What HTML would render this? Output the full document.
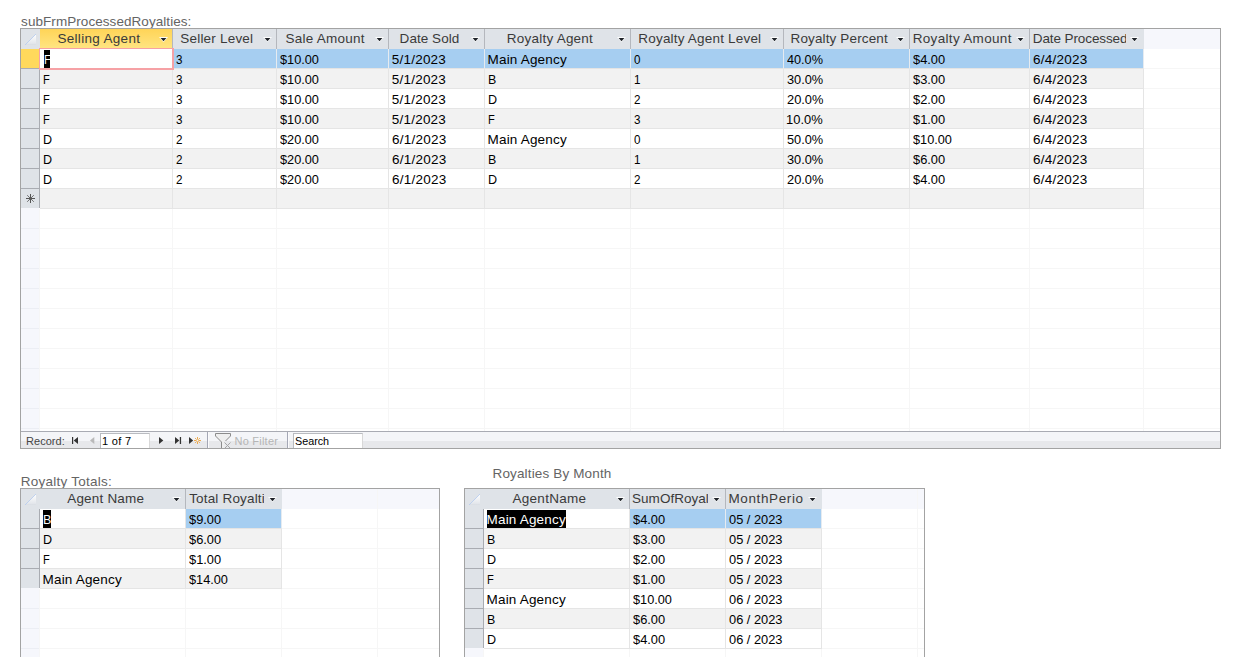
<!DOCTYPE html>
<html lang="en"><head><meta charset="utf-8"><title>Royalties</title>
<style>
*{box-sizing:border-box}
html,body{margin:0;padding:0}
body{width:1247px;height:657px;overflow:hidden;background:#fff;position:relative;
 font-family:"Liberation Sans",sans-serif;font-size:13.5px;color:#000}
.lbl{position:absolute;white-space:pre;line-height:19px;color:#646464;height:19px;margin:0;font-weight:400;font-size:13.5px}
.grid{position:absolute;border:1px solid #a3a3a3;background:#fff;overflow:hidden;box-sizing:content-box}
.grid div,.grid span,.grid svg{position:absolute}
.hbg{background:#f6f7fc}
.selbg{background:#f6f7fc}
.fh{height:1px;background:#f6f6f6}
.fv{width:1px;background:#f6f6f6}
.fh.s{background:#eceef4}
.hrow{left:0;top:0;height:20px;width:100%}
.hc{top:0;height:20px;background:#dfe3e8;color:#3a3a3a}
.hc.hsel{background:linear-gradient(#ffd457,#ffe583)}
.hc .clip{left:0;top:0;height:20px;overflow:hidden}
.ht{white-space:pre;line-height:19px}
.hline{top:0;width:1px;height:20px;background:#b4b7bd}
.row{left:0;height:20px}
.rs{left:0;top:0;width:19px;height:20px;background:#dfe3e8;border-right:1px solid #a9acb2;border-bottom:1px solid #a9acb2}
.rs.rsel{background:#ffd95c}
.rs.last{height:19px;border-bottom:0}
.c{top:0;height:20px;background:#fff;border-right:1px solid #e5e5e5;border-bottom:1px solid #e5e5e5;overflow:hidden}
.row.alt .c{background:#f2f2f2}
.row.cur .c{background:#a6cef1;border-right-color:#e6ebf0;border-bottom-color:#e4e4e4}
.row.cur .c.act{background:#fff;border-right-color:#e5e5e5}
.ct{white-space:pre;line-height:19px;height:19px}
.selbox{background:#000;top:1px;height:18px}
.ct.sel{color:#fff}
.row.cur .c.act.foc{border-right-color:#f6a1a5;border-bottom-color:#f6a1a5;box-shadow:-1px -1px 0 0 #f6a1a5,1px 1px 0 0 #f6a1a5,1px -1px 0 0 #f6a1a5,-1px 1px 0 0 #f6a1a5;overflow:visible;z-index:2}
.nav{left:0;height:17px;border-top:1px solid #a9abb3;background:linear-gradient(#f4f5f8 0,#f4f5f8 9px,#e7e8eb 9px,#e7e8eb 100%)}
.nt{font-size:11px;line-height:18px;color:#444;white-space:pre}
.nt.dis{color:#b5b5b5}
.nav .ni{top:5px}
.nbox{top:1px;height:15px;background:#fff;border:1px solid #b9bbc0;border-bottom:0;border-right-color:#d8d8d8}
.bt{font-size:11px;line-height:14px;white-space:pre}
.nsep{top:0;width:2px;height:16px;background:linear-gradient(90deg,#a4a7b5 0,#a4a7b5 1px,#fbfbfc 1px,#fbfbfc 2px)}
</style></head><body>
<h2 class="lbl" style="left:21.10px;top:12px;letter-spacing:0.06px;">subFrmProcessedRoyalties:</h2>
<h2 class="lbl" style="left:20.80px;top:472px;letter-spacing:0.239px;">Royalty Totals:</h2>
<h2 class="lbl" style="left:492.50px;top:464px;letter-spacing:0.147px;">Royalties By Month</h2>
<section class="grid" id="g1" style="left:20px;top:28px;width:1199px;height:419px">
<div class="hbg" style="left:0;top:0;width:1199px;height:20px"></div>
<div class="selbg" style="left:0;top:20px;width:18px;height:382px"></div>
<div class="fh" style="left:1123px;top:39px;width:76px"></div>
<div class="fh" style="left:1123px;top:59px;width:76px"></div>
<div class="fh" style="left:1123px;top:79px;width:76px"></div>
<div class="fh" style="left:1123px;top:99px;width:76px"></div>
<div class="fh" style="left:1123px;top:119px;width:76px"></div>
<div class="fh" style="left:1123px;top:139px;width:76px"></div>
<div class="fh" style="left:1123px;top:159px;width:76px"></div>
<div class="fh" style="left:1123px;top:179px;width:76px"></div>
<div class="fh" style="left:0;top:199px;width:1199px"></div>
<div class="fh s" style="left:0;top:199px;width:18px"></div>
<div class="fh" style="left:0;top:219px;width:1199px"></div>
<div class="fh s" style="left:0;top:219px;width:18px"></div>
<div class="fh" style="left:0;top:239px;width:1199px"></div>
<div class="fh s" style="left:0;top:239px;width:18px"></div>
<div class="fh" style="left:0;top:259px;width:1199px"></div>
<div class="fh s" style="left:0;top:259px;width:18px"></div>
<div class="fh" style="left:0;top:279px;width:1199px"></div>
<div class="fh s" style="left:0;top:279px;width:18px"></div>
<div class="fh" style="left:0;top:299px;width:1199px"></div>
<div class="fh s" style="left:0;top:299px;width:18px"></div>
<div class="fh" style="left:0;top:319px;width:1199px"></div>
<div class="fh s" style="left:0;top:319px;width:18px"></div>
<div class="fh" style="left:0;top:339px;width:1199px"></div>
<div class="fh s" style="left:0;top:339px;width:18px"></div>
<div class="fh" style="left:0;top:359px;width:1199px"></div>
<div class="fh s" style="left:0;top:359px;width:18px"></div>
<div class="fh" style="left:0;top:379px;width:1199px"></div>
<div class="fh s" style="left:0;top:379px;width:18px"></div>
<div class="fh" style="left:0;top:399px;width:1199px"></div>
<div class="fh s" style="left:0;top:399px;width:18px"></div>
<div class="fv" style="left:18px;top:180px;height:222px"></div>
<div class="fv" style="left:151px;top:180px;height:222px"></div>
<div class="fv" style="left:255px;top:180px;height:222px"></div>
<div class="fv" style="left:367px;top:180px;height:222px"></div>
<div class="fv" style="left:463px;top:180px;height:222px"></div>
<div class="fv" style="left:609px;top:180px;height:222px"></div>
<div class="fv" style="left:762px;top:180px;height:222px"></div>
<div class="fv" style="left:888px;top:180px;height:222px"></div>
<div class="fv" style="left:1008px;top:180px;height:222px"></div>
<div class="fv" style="left:1122px;top:180px;height:222px"></div>
<div class="hrow" role="row">
<div class="hc corner" style="left:0;width:19px"><svg width="18" height="20" viewBox="0 0 18 20"><defs><linearGradient id="g1cg" x1="0" y1="0" x2="0" y2="1"><stop offset="0" stop-color="#ffffff"/><stop offset=".85" stop-color="#e4e7ec"/><stop offset="1" stop-color="#d8dce2"/></linearGradient></defs><path d="M15 5V16H4Z" fill="url(#g1cg)"/><path d="M4 16L15 5" stroke="#b9cdee" stroke-width=".9" fill="none"/></svg></div>
<div class="hc hsel" role="columnheader" style="left:19px;width:132px"><div class="clip" style="width:115px">
<span class="ht" style="left:17.45px;top:0px;letter-spacing:0.308px;">Selling Agent</span>
</div></div>
<svg class="dd" style="left:138px;top:8px" width="10" height="6" viewBox="0 0 10 6"><path d="M0 0H9L4.5 5.2Z" fill="#fff" opacity=".9"/><path d="M1.6 1H7.4L4.5 4.2Z" fill="#20242a"/></svg>
<div class="hline" style="left:151px"></div>
<div class="hc" role="columnheader" style="left:152px;width:103px"><div class="clip" style="width:86px">
<span class="ht" style="left:7.25px;top:0px;letter-spacing:0.209px;">Seller Level</span>
</div></div>
<svg class="dd" style="left:242px;top:8px" width="10" height="6" viewBox="0 0 10 6"><path d="M0 0H9L4.5 5.2Z" fill="#fff" opacity=".9"/><path d="M1.6 1H7.4L4.5 4.2Z" fill="#20242a"/></svg>
<div class="hline" style="left:255px"></div>
<div class="hc" role="columnheader" style="left:256px;width:111px"><div class="clip" style="width:94px">
<span class="ht" style="left:8.55px;top:0px;letter-spacing:0.245px;">Sale Amount</span>
</div></div>
<svg class="dd" style="left:354px;top:8px" width="10" height="6" viewBox="0 0 10 6"><path d="M0 0H9L4.5 5.2Z" fill="#fff" opacity=".9"/><path d="M1.6 1H7.4L4.5 4.2Z" fill="#20242a"/></svg>
<div class="hline" style="left:367px"></div>
<div class="hc" role="columnheader" style="left:368px;width:95px"><div class="clip" style="width:78px">
<span class="ht" style="left:10.60px;top:0px;letter-spacing:0.044px;">Date Sold</span>
</div></div>
<svg class="dd" style="left:450px;top:8px" width="10" height="6" viewBox="0 0 10 6"><path d="M0 0H9L4.5 5.2Z" fill="#fff" opacity=".9"/><path d="M1.6 1H7.4L4.5 4.2Z" fill="#20242a"/></svg>
<div class="hline" style="left:463px"></div>
<div class="hc" role="columnheader" style="left:464px;width:145px"><div class="clip" style="width:128px">
<span class="ht" style="left:21.80px;top:0px;letter-spacing:0.229px;">Royalty Agent</span>
</div></div>
<svg class="dd" style="left:596px;top:8px" width="10" height="6" viewBox="0 0 10 6"><path d="M0 0H9L4.5 5.2Z" fill="#fff" opacity=".9"/><path d="M1.6 1H7.4L4.5 4.2Z" fill="#20242a"/></svg>
<div class="hline" style="left:609px"></div>
<div class="hc" role="columnheader" style="left:610px;width:152px"><div class="clip" style="width:135px">
<span class="ht" style="left:7.30px;top:0px;letter-spacing:0.194px;">Royalty Agent Level</span>
</div></div>
<svg class="dd" style="left:749px;top:8px" width="10" height="6" viewBox="0 0 10 6"><path d="M0 0H9L4.5 5.2Z" fill="#fff" opacity=".9"/><path d="M1.6 1H7.4L4.5 4.2Z" fill="#20242a"/></svg>
<div class="hline" style="left:762px"></div>
<div class="hc" role="columnheader" style="left:763px;width:125px"><div class="clip" style="width:108px">
<span class="ht" style="left:6.50px;top:0px;letter-spacing:0.136px;">Royalty Percent</span>
</div></div>
<svg class="dd" style="left:875px;top:8px" width="10" height="6" viewBox="0 0 10 6"><path d="M0 0H9L4.5 5.2Z" fill="#fff" opacity=".9"/><path d="M1.6 1H7.4L4.5 4.2Z" fill="#20242a"/></svg>
<div class="hline" style="left:888px"></div>
<div class="hc" role="columnheader" style="left:889px;width:119px"><div class="clip" style="width:102px">
<span class="ht" style="left:2.70px;top:0px;letter-spacing:0.323px;">Royalty Amount</span>
</div></div>
<svg class="dd" style="left:995px;top:8px" width="10" height="6" viewBox="0 0 10 6"><path d="M0 0H9L4.5 5.2Z" fill="#fff" opacity=".9"/><path d="M1.6 1H7.4L4.5 4.2Z" fill="#20242a"/></svg>
<div class="hline" style="left:1008px"></div>
<div class="hc" role="columnheader" style="left:1009px;width:114px"><div class="clip" style="width:96px">
<span class="ht" style="left:2.80px;top:0px;letter-spacing:-0.104px;">Date Processed</span>
</div></div>
<svg class="dd" style="left:1109px;top:8px" width="10" height="6" viewBox="0 0 10 6"><path d="M0 0H9L4.5 5.2Z" fill="#fff" opacity=".9"/><path d="M1.6 1H7.4L4.5 4.2Z" fill="#20242a"/></svg>
</div>
<div class="row cur" role="row" style="top:20px;width:1123px">
<div class="rs rsel"></div>
<div class="c act foc" role="gridcell" style="left:19px;width:133px">
<div class="selbox" style="left:4px;width:6px"></div>
<span class="ct sel" style="left:3.98px;top:1px;transform:scaleX(0.82);transform-origin:0 0;">F</span>
</div>
<div class="c" role="gridcell" style="left:152px;width:104px">
<span class="ct" style="left:3.17px;top:1px;transform:scaleX(0.86);transform-origin:0 0;">3</span>
</div>
<div class="c" role="gridcell" style="left:256px;width:112px">
<span class="ct" style="left:3.06px;top:1px;transform:scaleX(0.943);transform-origin:0 0;">$10.00</span>
</div>
<div class="c" role="gridcell" style="left:368px;width:96px">
<span class="ct" style="left:2.80px;top:1px;letter-spacing:0.214px;">5/1/2023</span>
</div>
<div class="c" role="gridcell" style="left:464px;width:146px">
<span class="ct" style="left:2.60px;top:1px;letter-spacing:0.175px;">Main Agency</span>
</div>
<div class="c" role="gridcell" style="left:610px;width:153px">
<span class="ct" style="left:3.17px;top:1px;transform:scaleX(0.86);transform-origin:0 0;">0</span>
</div>
<div class="c" role="gridcell" style="left:763px;width:126px">
<span class="ct" style="left:3.07px;top:1px;transform:scaleX(0.939);transform-origin:0 0;">40.0%</span>
</div>
<div class="c" role="gridcell" style="left:889px;width:120px">
<span class="ct" style="left:3.06px;top:1px;transform:scaleX(0.952);transform-origin:0 0;">$4.00</span>
</div>
<div class="c" role="gridcell" style="left:1009px;width:114px">
<span class="ct" style="left:3.05px;top:1px;letter-spacing:0.25px;">6/4/2023</span>
</div>
</div>
<div class="row alt" role="row" style="top:40px;width:1123px">
<div class="rs"></div>
<div class="c" role="gridcell" style="left:19px;width:133px">
<span class="ct" style="left:3.48px;top:1px;transform:scaleX(0.82);transform-origin:0 0;">F</span>
</div>
<div class="c" role="gridcell" style="left:152px;width:104px">
<span class="ct" style="left:3.17px;top:1px;transform:scaleX(0.86);transform-origin:0 0;">3</span>
</div>
<div class="c" role="gridcell" style="left:256px;width:112px">
<span class="ct" style="left:3.06px;top:1px;transform:scaleX(0.943);transform-origin:0 0;">$10.00</span>
</div>
<div class="c" role="gridcell" style="left:368px;width:96px">
<span class="ct" style="left:2.80px;top:1px;letter-spacing:0.214px;">5/1/2023</span>
</div>
<div class="c" role="gridcell" style="left:464px;width:146px">
<span class="ct" style="left:3.38px;top:1px;transform:scaleX(0.92);transform-origin:0 0;">B</span>
</div>
<div class="c" role="gridcell" style="left:610px;width:153px">
<span class="ct" style="left:2.74px;top:1px;transform:scaleX(0.86);transform-origin:0 0;">1</span>
</div>
<div class="c" role="gridcell" style="left:763px;width:126px">
<span class="ct" style="left:2.83px;top:1px;transform:scaleX(0.945);transform-origin:0 0;">30.0%</span>
</div>
<div class="c" role="gridcell" style="left:889px;width:120px">
<span class="ct" style="left:3.06px;top:1px;transform:scaleX(0.952);transform-origin:0 0;">$3.00</span>
</div>
<div class="c" role="gridcell" style="left:1009px;width:114px">
<span class="ct" style="left:3.05px;top:1px;letter-spacing:0.25px;">6/4/2023</span>
</div>
</div>
<div class="row" role="row" style="top:60px;width:1123px">
<div class="rs"></div>
<div class="c" role="gridcell" style="left:19px;width:133px">
<span class="ct" style="left:3.48px;top:1px;transform:scaleX(0.82);transform-origin:0 0;">F</span>
</div>
<div class="c" role="gridcell" style="left:152px;width:104px">
<span class="ct" style="left:3.17px;top:1px;transform:scaleX(0.86);transform-origin:0 0;">3</span>
</div>
<div class="c" role="gridcell" style="left:256px;width:112px">
<span class="ct" style="left:3.06px;top:1px;transform:scaleX(0.943);transform-origin:0 0;">$10.00</span>
</div>
<div class="c" role="gridcell" style="left:368px;width:96px">
<span class="ct" style="left:2.80px;top:1px;letter-spacing:0.214px;">5/1/2023</span>
</div>
<div class="c" role="gridcell" style="left:464px;width:146px">
<span class="ct" style="left:3.37px;top:1px;transform:scaleX(0.93);transform-origin:0 0;">D</span>
</div>
<div class="c" role="gridcell" style="left:610px;width:153px">
<span class="ct" style="left:2.96px;top:1px;transform:scaleX(0.86);transform-origin:0 0;">2</span>
</div>
<div class="c" role="gridcell" style="left:763px;width:126px">
<span class="ct" style="left:2.59px;top:1px;transform:scaleX(0.951);transform-origin:0 0;">20.0%</span>
</div>
<div class="c" role="gridcell" style="left:889px;width:120px">
<span class="ct" style="left:3.06px;top:1px;transform:scaleX(0.952);transform-origin:0 0;">$2.00</span>
</div>
<div class="c" role="gridcell" style="left:1009px;width:114px">
<span class="ct" style="left:3.05px;top:1px;letter-spacing:0.25px;">6/4/2023</span>
</div>
</div>
<div class="row alt" role="row" style="top:80px;width:1123px">
<div class="rs"></div>
<div class="c" role="gridcell" style="left:19px;width:133px">
<span class="ct" style="left:3.48px;top:1px;transform:scaleX(0.82);transform-origin:0 0;">F</span>
</div>
<div class="c" role="gridcell" style="left:152px;width:104px">
<span class="ct" style="left:3.17px;top:1px;transform:scaleX(0.86);transform-origin:0 0;">3</span>
</div>
<div class="c" role="gridcell" style="left:256px;width:112px">
<span class="ct" style="left:3.06px;top:1px;transform:scaleX(0.943);transform-origin:0 0;">$10.00</span>
</div>
<div class="c" role="gridcell" style="left:368px;width:96px">
<span class="ct" style="left:2.80px;top:1px;letter-spacing:0.214px;">5/1/2023</span>
</div>
<div class="c" role="gridcell" style="left:464px;width:146px">
<span class="ct" style="left:3.48px;top:1px;transform:scaleX(0.82);transform-origin:0 0;">F</span>
</div>
<div class="c" role="gridcell" style="left:610px;width:153px">
<span class="ct" style="left:3.17px;top:1px;transform:scaleX(0.86);transform-origin:0 0;">3</span>
</div>
<div class="c" role="gridcell" style="left:763px;width:126px">
<span class="ct" style="left:2.34px;top:1px;transform:scaleX(0.958);transform-origin:0 0;">10.0%</span>
</div>
<div class="c" role="gridcell" style="left:889px;width:120px">
<span class="ct" style="left:3.06px;top:1px;transform:scaleX(0.952);transform-origin:0 0;">$1.00</span>
</div>
<div class="c" role="gridcell" style="left:1009px;width:114px">
<span class="ct" style="left:3.05px;top:1px;letter-spacing:0.25px;">6/4/2023</span>
</div>
</div>
<div class="row" role="row" style="top:100px;width:1123px">
<div class="rs"></div>
<div class="c" role="gridcell" style="left:19px;width:133px">
<span class="ct" style="left:3.37px;top:1px;transform:scaleX(0.93);transform-origin:0 0;">D</span>
</div>
<div class="c" role="gridcell" style="left:152px;width:104px">
<span class="ct" style="left:2.96px;top:1px;transform:scaleX(0.86);transform-origin:0 0;">2</span>
</div>
<div class="c" role="gridcell" style="left:256px;width:112px">
<span class="ct" style="left:3.06px;top:1px;transform:scaleX(0.943);transform-origin:0 0;">$20.00</span>
</div>
<div class="c" role="gridcell" style="left:368px;width:96px">
<span class="ct" style="left:3.05px;top:1px;letter-spacing:0.25px;">6/1/2023</span>
</div>
<div class="c" role="gridcell" style="left:464px;width:146px">
<span class="ct" style="left:2.60px;top:1px;letter-spacing:0.175px;">Main Agency</span>
</div>
<div class="c" role="gridcell" style="left:610px;width:153px">
<span class="ct" style="left:3.17px;top:1px;transform:scaleX(0.86);transform-origin:0 0;">0</span>
</div>
<div class="c" role="gridcell" style="left:763px;width:126px">
<span class="ct" style="left:2.83px;top:1px;transform:scaleX(0.945);transform-origin:0 0;">50.0%</span>
</div>
<div class="c" role="gridcell" style="left:889px;width:120px">
<span class="ct" style="left:3.06px;top:1px;transform:scaleX(0.943);transform-origin:0 0;">$10.00</span>
</div>
<div class="c" role="gridcell" style="left:1009px;width:114px">
<span class="ct" style="left:3.05px;top:1px;letter-spacing:0.25px;">6/4/2023</span>
</div>
</div>
<div class="row alt" role="row" style="top:120px;width:1123px">
<div class="rs"></div>
<div class="c" role="gridcell" style="left:19px;width:133px">
<span class="ct" style="left:3.37px;top:1px;transform:scaleX(0.93);transform-origin:0 0;">D</span>
</div>
<div class="c" role="gridcell" style="left:152px;width:104px">
<span class="ct" style="left:2.96px;top:1px;transform:scaleX(0.86);transform-origin:0 0;">2</span>
</div>
<div class="c" role="gridcell" style="left:256px;width:112px">
<span class="ct" style="left:3.06px;top:1px;transform:scaleX(0.943);transform-origin:0 0;">$20.00</span>
</div>
<div class="c" role="gridcell" style="left:368px;width:96px">
<span class="ct" style="left:3.05px;top:1px;letter-spacing:0.25px;">6/1/2023</span>
</div>
<div class="c" role="gridcell" style="left:464px;width:146px">
<span class="ct" style="left:3.38px;top:1px;transform:scaleX(0.92);transform-origin:0 0;">B</span>
</div>
<div class="c" role="gridcell" style="left:610px;width:153px">
<span class="ct" style="left:2.74px;top:1px;transform:scaleX(0.86);transform-origin:0 0;">1</span>
</div>
<div class="c" role="gridcell" style="left:763px;width:126px">
<span class="ct" style="left:2.83px;top:1px;transform:scaleX(0.945);transform-origin:0 0;">30.0%</span>
</div>
<div class="c" role="gridcell" style="left:889px;width:120px">
<span class="ct" style="left:3.06px;top:1px;transform:scaleX(0.952);transform-origin:0 0;">$6.00</span>
</div>
<div class="c" role="gridcell" style="left:1009px;width:114px">
<span class="ct" style="left:3.05px;top:1px;letter-spacing:0.25px;">6/4/2023</span>
</div>
</div>
<div class="row" role="row" style="top:140px;width:1123px">
<div class="rs"></div>
<div class="c" role="gridcell" style="left:19px;width:133px">
<span class="ct" style="left:3.37px;top:1px;transform:scaleX(0.93);transform-origin:0 0;">D</span>
</div>
<div class="c" role="gridcell" style="left:152px;width:104px">
<span class="ct" style="left:2.96px;top:1px;transform:scaleX(0.86);transform-origin:0 0;">2</span>
</div>
<div class="c" role="gridcell" style="left:256px;width:112px">
<span class="ct" style="left:3.06px;top:1px;transform:scaleX(0.943);transform-origin:0 0;">$20.00</span>
</div>
<div class="c" role="gridcell" style="left:368px;width:96px">
<span class="ct" style="left:3.05px;top:1px;letter-spacing:0.25px;">6/1/2023</span>
</div>
<div class="c" role="gridcell" style="left:464px;width:146px">
<span class="ct" style="left:3.37px;top:1px;transform:scaleX(0.93);transform-origin:0 0;">D</span>
</div>
<div class="c" role="gridcell" style="left:610px;width:153px">
<span class="ct" style="left:2.96px;top:1px;transform:scaleX(0.86);transform-origin:0 0;">2</span>
</div>
<div class="c" role="gridcell" style="left:763px;width:126px">
<span class="ct" style="left:2.59px;top:1px;transform:scaleX(0.951);transform-origin:0 0;">20.0%</span>
</div>
<div class="c" role="gridcell" style="left:889px;width:120px">
<span class="ct" style="left:3.06px;top:1px;transform:scaleX(0.952);transform-origin:0 0;">$4.00</span>
</div>
<div class="c" role="gridcell" style="left:1009px;width:114px">
<span class="ct" style="left:3.05px;top:1px;letter-spacing:0.25px;">6/4/2023</span>
</div>
</div>
<div class="row alt" role="row" style="top:160px;width:1123px">
<div class="rs last"><svg width="18" height="19" viewBox="0 0 18 19"><path d="M9.5 5V14M5 9.5H14" stroke="#555" stroke-width="1" fill="none" shape-rendering="crispEdges"/><path d="M6.2 6.2L12.8 12.8M12.8 6.2L6.2 12.8" stroke="#666" stroke-width=".9" fill="none"/><rect x="8.5" y="8.5" width="2" height="2" fill="#555" opacity=".6"/></svg></div>
<div class="c" role="gridcell" style="left:19px;width:133px">
</div>
<div class="c" role="gridcell" style="left:152px;width:104px">
</div>
<div class="c" role="gridcell" style="left:256px;width:112px">
</div>
<div class="c" role="gridcell" style="left:368px;width:96px">
</div>
<div class="c" role="gridcell" style="left:464px;width:146px">
</div>
<div class="c" role="gridcell" style="left:610px;width:153px">
</div>
<div class="c" role="gridcell" style="left:763px;width:126px">
</div>
<div class="c" role="gridcell" style="left:889px;width:120px">
</div>
<div class="c" role="gridcell" style="left:1009px;width:114px">
</div>
</div>
<div class="nav" style="top:402px;width:1199px">
<span class="nt" style="left:5.10px;top:0px;letter-spacing:0.025px;">Record:</span>
<svg class="ni" style="left:50px" width="8" height="8" viewBox="0 0 8 8"><path d="M1 0H2.2V7H1Z M7 0V7L2.7 3.5Z" fill="#333"/></svg>
<svg class="ni" style="left:68px" width="8" height="8" viewBox="0 0 8 8"><path d="M5.3 0V7L1 3.5Z" fill="#b9b9b9"/></svg>
<div class="nbox" style="left:79px;width:50px">
<span class="bt" style="left:1.05px;top:0px;letter-spacing:0.32px;">1 of 7</span>
</div>
<svg class="ni" style="left:137px" width="8" height="8" viewBox="0 0 8 8"><path d="M1 0V7L5.3 3.5Z" fill="#333"/></svg>
<svg class="ni" style="left:153px" width="8" height="8" viewBox="0 0 8 8"><path d="M1 0V7L5.3 3.5Z M5.8 0H7.1V7H5.8Z" fill="#333"/></svg>
<svg class="ni" style="left:167px" width="14" height="8" viewBox="0 0 14 8"><path d="M1 0V7L5.2 3.5Z" fill="#333"/><g stroke="#eeaa4c" stroke-width="1" fill="none"><path d="M9.5 0V2M9.5 5V7M6 3.5H8M11 3.5H13M7.1 1.1L8.3 2.3M10.7 4.7L11.9 5.9M11.9 1.1L10.7 2.3M8.3 4.7L7.1 5.9"/><circle cx="9.5" cy="3.5" r="1.2" stroke-width=".8"/></g></svg>
<div class="nsep" style="left:186px"></div>
<svg class="nf" style="left:193px;top:0" width="18" height="16" viewBox="0 0 18 16"><path d="M1.5 1.5H16.5V4L10.5 10V16H7.5V10L1.5 4Z" fill="#efefef"/><path d="M1.5 4V1.5H16.5V4L11.5 9M1.5 4L7.5 10V16" stroke="#8c8c8c" stroke-width="1" fill="none"/><path d="M10.5 10.5L16 16M16.5 10.5L11 16" stroke="#a6a6a6" stroke-width="1" fill="none"/></svg>
<span class="nt dis" style="left:213.50px;top:0px;letter-spacing:0.231px;">No Filter</span>
<div class="nsep" style="left:266px"></div>
<div class="nbox" style="left:272px;width:70px">
<span class="bt" style="left:0.91px;top:0px;transform:scaleX(0.978);transform-origin:0 0;">Search</span>
</div>
</div>
</section>
<section class="grid" id="g2" style="left:20px;top:488px;width:418px;height:211px">
<div class="hbg" style="left:0;top:0;width:418px;height:20px"></div>
<div class="selbg" style="left:0;top:20px;width:18px;height:191px"></div>
<div class="fh" style="left:261px;top:39px;width:157px"></div>
<div class="fh" style="left:261px;top:59px;width:157px"></div>
<div class="fh" style="left:261px;top:79px;width:157px"></div>
<div class="fh" style="left:261px;top:99px;width:157px"></div>
<div class="fh" style="left:0;top:119px;width:418px"></div>
<div class="fh s" style="left:0;top:119px;width:18px"></div>
<div class="fh" style="left:0;top:139px;width:418px"></div>
<div class="fh s" style="left:0;top:139px;width:18px"></div>
<div class="fh" style="left:0;top:159px;width:418px"></div>
<div class="fh s" style="left:0;top:159px;width:18px"></div>
<div class="fh" style="left:0;top:179px;width:418px"></div>
<div class="fh s" style="left:0;top:179px;width:18px"></div>
<div class="fh" style="left:0;top:199px;width:418px"></div>
<div class="fh s" style="left:0;top:199px;width:18px"></div>
<div class="fv" style="left:18px;top:100px;height:111px"></div>
<div class="fv" style="left:164px;top:100px;height:111px"></div>
<div class="fv" style="left:260px;top:100px;height:111px"></div>
<div class="fv" style="left:356px;top:0;height:211px"></div>
<div class="hrow" role="row">
<div class="hc corner" style="left:0;width:19px"><svg width="18" height="20" viewBox="0 0 18 20"><defs><linearGradient id="g2cg" x1="0" y1="0" x2="0" y2="1"><stop offset="0" stop-color="#ffffff"/><stop offset=".85" stop-color="#e4e7ec"/><stop offset="1" stop-color="#d8dce2"/></linearGradient></defs><path d="M15 5V16H4Z" fill="url(#g2cg)"/><path d="M4 16L15 5" stroke="#b9cdee" stroke-width=".9" fill="none"/></svg></div>
<div class="hc" role="columnheader" style="left:19px;width:145px"><div class="clip" style="width:128px">
<span class="ht" style="left:27.20px;top:0px;letter-spacing:0.2px;">Agent Name</span>
</div></div>
<svg class="dd" style="left:151px;top:8px" width="10" height="6" viewBox="0 0 10 6"><path d="M0 0H9L4.5 5.2Z" fill="#fff" opacity=".9"/><path d="M1.6 1H7.4L4.5 4.2Z" fill="#20242a"/></svg>
<div class="hline" style="left:164px"></div>
<div class="hc" role="columnheader" style="left:165px;width:96px"><div class="clip" style="width:78px">
<span class="ht" style="left:3.15px;top:0px;letter-spacing:0.175px;">Total Royalti</span>
</div></div>
<svg class="dd" style="left:247px;top:8px" width="10" height="6" viewBox="0 0 10 6"><path d="M0 0H9L4.5 5.2Z" fill="#fff" opacity=".9"/><path d="M1.6 1H7.4L4.5 4.2Z" fill="#20242a"/></svg>
</div>
<div class="row cur" role="row" style="top:20px;width:261px">
<div class="rs"></div>
<div class="c act" role="gridcell" style="left:19px;width:146px">
<div class="selbox" style="left:3px;width:8px"></div>
<span class="ct sel" style="left:3.38px;top:1px;transform:scaleX(0.92);transform-origin:0 0;">B</span>
</div>
<div class="c" role="gridcell" style="left:165px;width:96px">
<span class="ct" style="left:3.06px;top:1px;transform:scaleX(0.952);transform-origin:0 0;">$9.00</span>
</div>
</div>
<div class="row alt" role="row" style="top:40px;width:261px">
<div class="rs"></div>
<div class="c" role="gridcell" style="left:19px;width:146px">
<span class="ct" style="left:3.37px;top:1px;transform:scaleX(0.93);transform-origin:0 0;">D</span>
</div>
<div class="c" role="gridcell" style="left:165px;width:96px">
<span class="ct" style="left:3.06px;top:1px;transform:scaleX(0.952);transform-origin:0 0;">$6.00</span>
</div>
</div>
<div class="row" role="row" style="top:60px;width:261px">
<div class="rs"></div>
<div class="c" role="gridcell" style="left:19px;width:146px">
<span class="ct" style="left:3.48px;top:1px;transform:scaleX(0.82);transform-origin:0 0;">F</span>
</div>
<div class="c" role="gridcell" style="left:165px;width:96px">
<span class="ct" style="left:3.06px;top:1px;transform:scaleX(0.952);transform-origin:0 0;">$1.00</span>
</div>
</div>
<div class="row alt" role="row" style="top:80px;width:261px">
<div class="rs last"></div>
<div class="c" role="gridcell" style="left:19px;width:146px">
<span class="ct" style="left:2.60px;top:1px;letter-spacing:0.175px;">Main Agency</span>
</div>
<div class="c" role="gridcell" style="left:165px;width:96px">
<span class="ct" style="left:3.06px;top:1px;transform:scaleX(0.943);transform-origin:0 0;">$14.00</span>
</div>
</div>
</section>
<section class="grid" id="g3" style="left:464px;top:488px;width:459px;height:211px">
<div class="hbg" style="left:0;top:0;width:459px;height:20px"></div>
<div class="selbg" style="left:0;top:20px;width:18px;height:191px"></div>
<div class="fh" style="left:357px;top:39px;width:102px"></div>
<div class="fh" style="left:357px;top:59px;width:102px"></div>
<div class="fh" style="left:357px;top:79px;width:102px"></div>
<div class="fh" style="left:357px;top:99px;width:102px"></div>
<div class="fh" style="left:357px;top:119px;width:102px"></div>
<div class="fh" style="left:357px;top:139px;width:102px"></div>
<div class="fh" style="left:357px;top:159px;width:102px"></div>
<div class="fh" style="left:0;top:179px;width:459px"></div>
<div class="fh s" style="left:0;top:179px;width:18px"></div>
<div class="fh" style="left:0;top:199px;width:459px"></div>
<div class="fh s" style="left:0;top:199px;width:18px"></div>
<div class="fv" style="left:18px;top:160px;height:51px"></div>
<div class="fv" style="left:164px;top:160px;height:51px"></div>
<div class="fv" style="left:260px;top:160px;height:51px"></div>
<div class="fv" style="left:356px;top:160px;height:51px"></div>
<div class="fv" style="left:452px;top:0;height:211px"></div>
<div class="hrow" role="row">
<div class="hc corner" style="left:0;width:19px"><svg width="18" height="20" viewBox="0 0 18 20"><defs><linearGradient id="g3cg" x1="0" y1="0" x2="0" y2="1"><stop offset="0" stop-color="#ffffff"/><stop offset=".85" stop-color="#e4e7ec"/><stop offset="1" stop-color="#d8dce2"/></linearGradient></defs><path d="M15 5V16H4Z" fill="url(#g3cg)"/><path d="M4 16L15 5" stroke="#b9cdee" stroke-width=".9" fill="none"/></svg></div>
<div class="hc" role="columnheader" style="left:19px;width:145px"><div class="clip" style="width:128px">
<span class="ht" style="left:28.50px;top:0px;letter-spacing:0.281px;">AgentName</span>
</div></div>
<svg class="dd" style="left:151px;top:8px" width="10" height="6" viewBox="0 0 10 6"><path d="M0 0H9L4.5 5.2Z" fill="#fff" opacity=".9"/><path d="M1.6 1H7.4L4.5 4.2Z" fill="#20242a"/></svg>
<div class="hline" style="left:164px"></div>
<div class="hc" role="columnheader" style="left:165px;width:95px"><div class="clip" style="width:78px">
<span class="ht" style="left:2.05px;top:0px;letter-spacing:0.028px;">SumOfRoyal</span>
</div></div>
<svg class="dd" style="left:247px;top:8px" width="10" height="6" viewBox="0 0 10 6"><path d="M0 0H9L4.5 5.2Z" fill="#fff" opacity=".9"/><path d="M1.6 1H7.4L4.5 4.2Z" fill="#20242a"/></svg>
<div class="hline" style="left:260px"></div>
<div class="hc" role="columnheader" style="left:261px;width:96px"><div class="clip" style="width:78px">
<span class="ht" style="left:2.50px;top:0px;letter-spacing:0.611px;">MonthPerio</span>
</div></div>
<svg class="dd" style="left:343px;top:8px" width="10" height="6" viewBox="0 0 10 6"><path d="M0 0H9L4.5 5.2Z" fill="#fff" opacity=".9"/><path d="M1.6 1H7.4L4.5 4.2Z" fill="#20242a"/></svg>
</div>
<div class="row cur" role="row" style="top:20px;width:357px">
<div class="rs"></div>
<div class="c act" role="gridcell" style="left:19px;width:146px">
<div class="selbox" style="left:3px;width:79px"></div>
<span class="ct sel" style="left:2.60px;top:1px;letter-spacing:0.175px;">Main Agency</span>
</div>
<div class="c" role="gridcell" style="left:165px;width:96px">
<span class="ct" style="left:3.06px;top:1px;transform:scaleX(0.952);transform-origin:0 0;">$4.00</span>
</div>
<div class="c" role="gridcell" style="left:261px;width:96px">
<span class="ct" style="left:2.82px;top:1px;transform:scaleX(0.95);transform-origin:0 0;">05 / 2023</span>
</div>
</div>
<div class="row alt" role="row" style="top:40px;width:357px">
<div class="rs"></div>
<div class="c" role="gridcell" style="left:19px;width:146px">
<span class="ct" style="left:3.38px;top:1px;transform:scaleX(0.92);transform-origin:0 0;">B</span>
</div>
<div class="c" role="gridcell" style="left:165px;width:96px">
<span class="ct" style="left:3.06px;top:1px;transform:scaleX(0.952);transform-origin:0 0;">$3.00</span>
</div>
<div class="c" role="gridcell" style="left:261px;width:96px">
<span class="ct" style="left:2.82px;top:1px;transform:scaleX(0.95);transform-origin:0 0;">05 / 2023</span>
</div>
</div>
<div class="row" role="row" style="top:60px;width:357px">
<div class="rs"></div>
<div class="c" role="gridcell" style="left:19px;width:146px">
<span class="ct" style="left:3.37px;top:1px;transform:scaleX(0.93);transform-origin:0 0;">D</span>
</div>
<div class="c" role="gridcell" style="left:165px;width:96px">
<span class="ct" style="left:3.06px;top:1px;transform:scaleX(0.952);transform-origin:0 0;">$2.00</span>
</div>
<div class="c" role="gridcell" style="left:261px;width:96px">
<span class="ct" style="left:2.82px;top:1px;transform:scaleX(0.95);transform-origin:0 0;">05 / 2023</span>
</div>
</div>
<div class="row alt" role="row" style="top:80px;width:357px">
<div class="rs"></div>
<div class="c" role="gridcell" style="left:19px;width:146px">
<span class="ct" style="left:3.48px;top:1px;transform:scaleX(0.82);transform-origin:0 0;">F</span>
</div>
<div class="c" role="gridcell" style="left:165px;width:96px">
<span class="ct" style="left:3.06px;top:1px;transform:scaleX(0.952);transform-origin:0 0;">$1.00</span>
</div>
<div class="c" role="gridcell" style="left:261px;width:96px">
<span class="ct" style="left:2.82px;top:1px;transform:scaleX(0.95);transform-origin:0 0;">05 / 2023</span>
</div>
</div>
<div class="row" role="row" style="top:100px;width:357px">
<div class="rs"></div>
<div class="c" role="gridcell" style="left:19px;width:146px">
<span class="ct" style="left:2.60px;top:1px;letter-spacing:0.175px;">Main Agency</span>
</div>
<div class="c" role="gridcell" style="left:165px;width:96px">
<span class="ct" style="left:3.06px;top:1px;transform:scaleX(0.943);transform-origin:0 0;">$10.00</span>
</div>
<div class="c" role="gridcell" style="left:261px;width:96px">
<span class="ct" style="left:2.82px;top:1px;transform:scaleX(0.95);transform-origin:0 0;">06 / 2023</span>
</div>
</div>
<div class="row alt" role="row" style="top:120px;width:357px">
<div class="rs"></div>
<div class="c" role="gridcell" style="left:19px;width:146px">
<span class="ct" style="left:3.38px;top:1px;transform:scaleX(0.92);transform-origin:0 0;">B</span>
</div>
<div class="c" role="gridcell" style="left:165px;width:96px">
<span class="ct" style="left:3.06px;top:1px;transform:scaleX(0.952);transform-origin:0 0;">$6.00</span>
</div>
<div class="c" role="gridcell" style="left:261px;width:96px">
<span class="ct" style="left:2.82px;top:1px;transform:scaleX(0.95);transform-origin:0 0;">06 / 2023</span>
</div>
</div>
<div class="row" role="row" style="top:140px;width:357px">
<div class="rs last"></div>
<div class="c" role="gridcell" style="left:19px;width:146px">
<span class="ct" style="left:3.37px;top:1px;transform:scaleX(0.93);transform-origin:0 0;">D</span>
</div>
<div class="c" role="gridcell" style="left:165px;width:96px">
<span class="ct" style="left:3.06px;top:1px;transform:scaleX(0.952);transform-origin:0 0;">$4.00</span>
</div>
<div class="c" role="gridcell" style="left:261px;width:96px">
<span class="ct" style="left:2.82px;top:1px;transform:scaleX(0.95);transform-origin:0 0;">06 / 2023</span>
</div>
</div>
</section>
</body></html>
